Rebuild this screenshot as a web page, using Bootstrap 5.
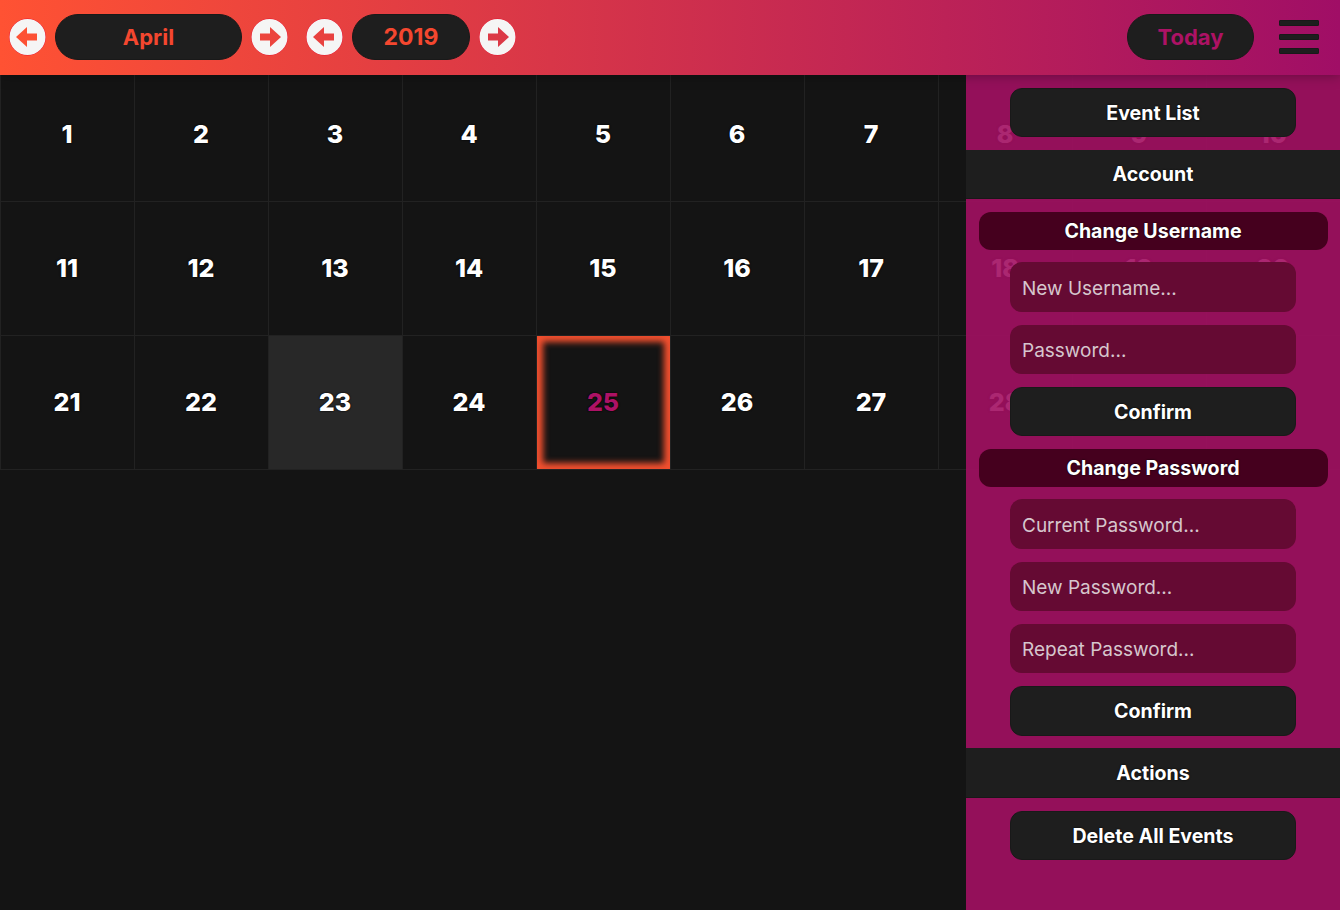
<!DOCTYPE html>
<html lang="en">
<head>
<meta charset="utf-8">
<title>Calendar</title>
<link href="https://cdn.jsdelivr.net/npm/bootstrap@5.3.0/dist/css/bootstrap.min.css" rel="stylesheet">
<style>
html,body{height:910px;overflow:hidden}
body{background:#141414;font-family:Inter,"Liberation Sans",sans-serif;position:relative}
.topbar{height:75px;background:linear-gradient(90deg,#ff5233 0%,#a00e66 100%);position:relative;z-index:3;box-shadow:0 0 12px rgba(0,0,0,.35);padding:0 21px 1px 9px}
.pill{height:46px;border-radius:23px;background:#1e1e1e;border:1px solid #191919;font-size:22px;font-weight:700;display:flex;align-items:center;justify-content:center;color:#f4472f;line-height:1}
.pill-month{width:187px;margin:0 9px}
.pill-year{width:118px;margin:0 9px;font-size:23px}
.pill-today{width:127px;color:#ad1265;margin-right:25px}
.arrow-btn{width:37px;height:38px;display:block;flex:none}
.arrow-gap{margin-left:18px}
.arrow-ring{fill:none;stroke:#e8112d;stroke-width:1}
.arrow-disc{fill:#f5f5f5;fill-rule:evenodd}
.burger{width:40px;height:34px;display:flex;flex-direction:column;justify-content:space-between}
.burger span{height:6px;background:#1e1e1e;border:1px solid #191919;border-radius:1px;display:block}
.day-grid{display:grid;grid-template-columns:repeat(10,134px);grid-auto-rows:134px;margin-top:-8px;border-bottom:1px solid #222}
.day-cell{border-left:1px solid #222;border-top:1px solid #222;background:#141414;display:flex;align-items:center;justify-content:center;color:#fff;font-size:25px;font-weight:800;text-shadow:0 0 2px #000,0 0 1px #000;padding-right:1px}
.day-past{background:#282828}
.day-now{color:#ad1265;box-shadow:inset 0 0 6px 6px #f4502f}
.side-panel{position:absolute;top:75px;right:0;bottom:0;width:374px;background:rgba(162,15,98,.9);z-index:2;padding-top:12.5px;gap:12.7px}
.side-btn,.side-band{height:49.6px;background:#1e1e1e;color:#fff;font-size:19.6px;font-weight:700;line-height:1;text-shadow:0 0 2px #000;display:flex;align-items:center;justify-content:center;flex:none;padding:2px 0 0}
.side-btn{width:286px;border:1px solid #191919;border-radius:12px}
.side-btn:hover{background:#1e1e1e;color:#fff}
.side-band{width:100%;border-bottom:1px solid #181818}
.side-head{width:349px;height:37.5px;background:#45001e;border-radius:12px;color:#fff;font-size:19.6px;font-weight:700;line-height:1;text-shadow:0 0 2px #000;display:flex;align-items:center;justify-content:center;flex:none;padding-top:2px}
.side-input.form-control{width:286px;height:49.6px;flex:none;background:#650a33;border:0;border-radius:12px;padding:2px 12px 0;font-size:19px;color:#fff;box-shadow:none}
.side-input.form-control::placeholder{color:#d6c6cd;opacity:1;font-weight:400}
</style>
</head>
<body>
<header class="topbar d-flex align-items-center">
  <svg class="arrow-btn" viewBox="0 0 37 38" aria-hidden="true"><circle class="arrow-ring" cx="18.5" cy="19" r="18"/><path class="arrow-disc" d="M18.5 1a18 18 0 1 0 0 36 18 18 0 0 0 0-36ZM18 9V15.500H28V22.500H18V29L7 19Z"/></svg>
  <div class="pill pill-month">April</div>
  <svg class="arrow-btn" viewBox="0 0 37 38" aria-hidden="true"><circle class="arrow-ring" cx="18.5" cy="19" r="18"/><path class="arrow-disc" d="M18.500 1a18 18 0 1 0 0 36 18 18 0 0 0 0-36ZM19 9V15.500H9V22.500H19V29L30 19Z"/></svg>
  <svg class="arrow-btn arrow-gap" viewBox="0 0 37 38" aria-hidden="true"><circle class="arrow-ring" cx="18.5" cy="19" r="18"/><path class="arrow-disc" d="M18.500 1a18 18 0 1 0 0 36 18 18 0 0 0 0-36ZM18 9V15.500H28V22.500H18V29L7 19Z"/></svg>
  <div class="pill pill-year">2019</div>
  <svg class="arrow-btn" viewBox="0 0 37 38" aria-hidden="true"><circle class="arrow-ring" cx="18.5" cy="19" r="18"/><path class="arrow-disc" d="M18.500 1a18 18 0 1 0 0 36 18 18 0 0 0 0-36ZM19 9V15.500H9V22.500H19V29L30 19Z"/></svg>
  <div class="pill pill-today ms-auto">Today</div>
  <div class="burger" aria-hidden="true"><span></span><span></span><span></span></div>
</header>
<main class="day-grid">
  <div class="day-cell">1</div><div class="day-cell">2</div><div class="day-cell">3</div><div class="day-cell">4</div><div class="day-cell">5</div><div class="day-cell">6</div><div class="day-cell">7</div><div class="day-cell">8</div><div class="day-cell">9</div><div class="day-cell">10</div>
  <div class="day-cell">11</div><div class="day-cell">12</div><div class="day-cell">13</div><div class="day-cell">14</div><div class="day-cell">15</div><div class="day-cell">16</div><div class="day-cell">17</div><div class="day-cell">18</div><div class="day-cell">19</div><div class="day-cell">20</div>
  <div class="day-cell">21</div><div class="day-cell">22</div><div class="day-cell day-past">23</div><div class="day-cell">24</div><div class="day-cell day-now">25</div><div class="day-cell">26</div><div class="day-cell">27</div><div class="day-cell">28</div><div class="day-cell">29</div><div class="day-cell">30</div>
</main>
<aside class="side-panel d-flex flex-column align-items-center">
  <button type="button" class="btn side-btn">Event List</button>
  <div class="side-band">Account</div>
  <div class="side-head">Change Username</div>
  <input class="form-control side-input" type="text" placeholder="New Username...">
  <input class="form-control side-input" type="password" placeholder="Password...">
  <button type="button" class="btn side-btn">Confirm</button>
  <div class="side-head">Change Password</div>
  <input class="form-control side-input" type="password" placeholder="Current Password...">
  <input class="form-control side-input" type="password" placeholder="New Password...">
  <input class="form-control side-input" type="password" placeholder="Repeat Password...">
  <button type="button" class="btn side-btn">Confirm</button>
  <div class="side-band">Actions</div>
  <button type="button" class="btn side-btn">Delete All Events</button>
</aside>
<script src="https://cdn.jsdelivr.net/npm/bootstrap@5.3.0/dist/js/bootstrap.bundle.min.js"></script>
</body>
</html>
